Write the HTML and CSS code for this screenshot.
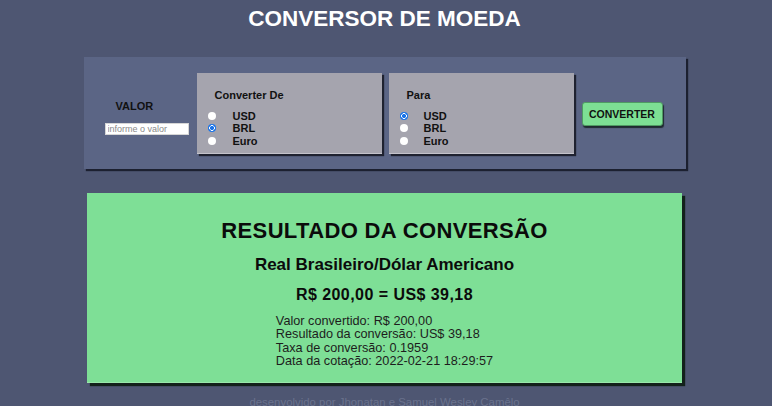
FILE: index.html
```html
<!DOCTYPE html>
<html lang="pt-BR">
<head>
<meta charset="utf-8">
<title>Conversor de Moeda</title>
<link rel="stylesheet" href="styles.css">
</head>
<body>
<div class="page">
  <h1 class="title">CONVERSOR DE MOEDA</h1>

  <form class="panel">
    <div class="valor">
      <div class="valor-label">VALOR</div>
      <input class="valor-input" type="text" placeholder="informe o valor">
    </div>

    <div class="box">
      <div class="box-title">Converter De</div>
      <label class="opt"><input type="radio" name="de"><span>USD</span></label>
      <label class="opt"><input type="radio" name="de" checked><span>BRL</span></label>
      <label class="opt"><input type="radio" name="de"><span>Euro</span></label>
    </div>

    <div class="box box-para">
      <div class="box-title">Para</div>
      <label class="opt"><input type="radio" name="para" checked><span>USD</span></label>
      <label class="opt"><input type="radio" name="para"><span>BRL</span></label>
      <label class="opt"><input type="radio" name="para"><span>Euro</span></label>
    </div>

    <button class="btn" type="button">CONVERTER</button>
  </form>

  <section class="result">
    <h2 class="result-title">RESULTADO DA CONVERSÃO</h2>
    <h3 class="result-pair">Real Brasileiro/Dólar Americano</h3>
    <p class="result-main">R$ 200,00 = US$ 39,18</p>
    <div class="details">
      <div>Valor convertido: R$ 200,00</div>
      <div>Resultado da conversão: US$ 39,18</div>
      <div>Taxa de conversão: 0.1959</div>
      <div>Data da cotação: 2022-02-21 18:29:57</div>
    </div>
  </section>

  <footer class="footer">desenvolvido por Jhonatan e Samuel Wesley Camêlo</footer>
</div>
</body>
</html>
```

FILE: styles.css
```css
* { box-sizing: border-box; }

html, body {
  margin: 0;
  padding: 0;
  height: 100%;
  overflow: hidden;
}

body {
  background: #4e5672;
  font-family: "Liberation Sans", Arial, sans-serif;
  color: #111;
}

.page {
  width: 769px;
}

.title {
  margin: 0;
  padding-top: 6px;
  font-size: 22.5px;
  line-height: 26px;
  font-weight: bold;
  color: #fff;
  text-align: center;
}

.panel {
  width: 602px;
  height: 112px;
  margin: 25px auto 0;
  background: #5b6585;
  box-shadow: 2px 2px 1px #1c2030;
  padding: 16px 22px 16px 21px;
  display: flex;
  align-items: flex-start;
}

.valor {
  width: 84px;
  margin-top: 27px;
  display: flex;
  flex-direction: column;
}

.valor-label {
  padding-left: 11px;
  font-size: 11px;
  line-height: 13px;
  font-weight: bold;
  color: #111;
}

.valor-input {
  margin-top: 10px;
  width: 84px;
  height: 12px;
  border: 1px solid #d6d6d6;
  background: #fff;
  padding: 0 2px;
  font-family: "Liberation Sans", Arial, sans-serif;
  font-size: 9px;
  outline: none;
}

.valor-input::placeholder { color: #8a8a8a; }

.box {
  width: 185px;
  height: 81px;
  margin-left: 8px;
  background: #a5a4ae;
  border-bottom: 1px solid #c4c3cb;
  box-shadow: 2px 2px 1px #1f2230;
  padding: 16px 0 0 10px;
}

.box-para { margin-left: 7px; padding-left: 10px; }

.box-title {
  padding-left: 8px;
  font-size: 11px;
  line-height: 13px;
  font-weight: bold;
  margin-bottom: 7.5px;
}

.opt {
  display: flex;
  align-items: center;
  height: 12.5px;
  font-size: 11px;
  font-weight: bold;
}

.opt input {
  -webkit-appearance: none;
  appearance: none;
  width: 8px;
  height: 8px;
  margin: 0 17px 0 1px;
  border-radius: 50%;
  background: #fff;
  border: none;
  flex: none;
}

.opt input:checked {
  background: radial-gradient(circle, #1a73e8 0 1.8px, #fff 2.3px 2.6px, #1a73e8 3px);
}

.box-para .opt input { margin-right: 16px; }

.btn {
  margin: 29px 0 0 8px;
  width: 81px;
  height: 24px;
  background: #7ddf94;
  border: 1px solid #4f9a63;
  border-radius: 3px;
  box-shadow: 1px 2px 1px #1f2a30;
  font-family: "Liberation Sans", Arial, sans-serif;
  font-size: 10.5px;
  font-weight: bold;
  color: #111;
  padding: 0;
}

.result {
  width: 595px;
  margin: 24px auto 0;
  background: #7edf96;
  border-bottom: 1px solid #9ae8ab;
  box-shadow: 3px 3px 1px #13211b;
  padding: 25px 0 13px;
  text-align: center;
}

.result-title {
  margin: 0;
  font-size: 22px;
  line-height: 25px;
  letter-spacing: 0.35px;
  font-weight: bold;
  color: #0b0b0b;
}

.result-pair {
  margin: 12px 0 0;
  font-size: 17px;
  line-height: 19.5px;
  font-weight: bold;
  color: #0b0b0b;
}

.result-main {
  margin: 11px 0 0;
  font-size: 16px;
  line-height: 18.5px;
  letter-spacing: 0.45px;
  font-weight: bold;
  color: #0b0b0b;
}

.details {
  display: inline-block;
  margin-top: 11px;
  text-align: left;
  font-size: 12.7px;
  line-height: 13.35px;
  color: #1d1d1d;
}

.footer {
  margin-top: 12px;
  text-align: center;
  font-size: 11.4px;
  line-height: 14px;
  color: #6a728d;
}
```
